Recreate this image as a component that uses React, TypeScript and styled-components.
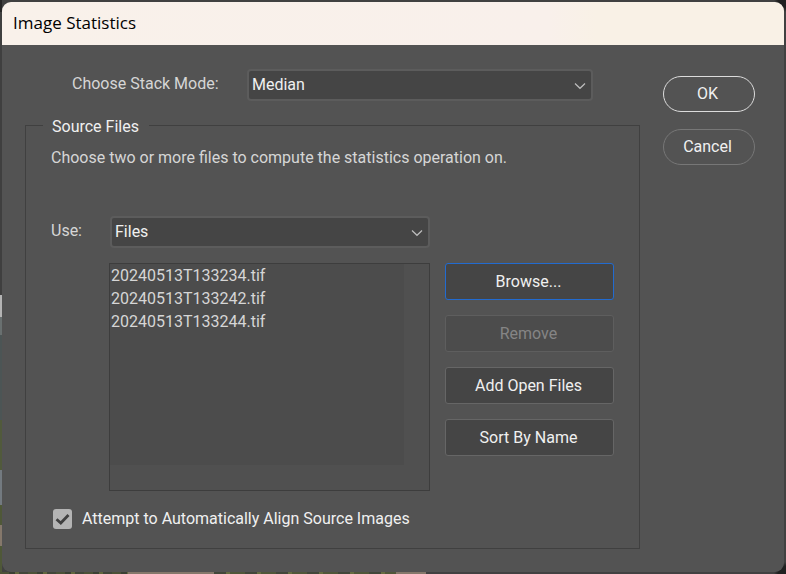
import React, { useId, useState } from 'react';
import styled, { createGlobalStyle } from 'styled-components';

const uiFont = 'Roboto, "Noto Sans", sans-serif';
const titleFont = '"Open Sans", "Noto Sans", sans-serif';

const GlobalStyle = createGlobalStyle`
  * {
    box-sizing: border-box;
  }
  body {
    margin: 0;
    min-height: 100vh;
    font: 16px/22px ${uiFont};
    color: #d6d6d6;
    background:
      repeating-linear-gradient(90deg, #4c5238 0 9px, #3b4134 9px 15px, #61673f 15px 19px, #42473a 19px 28px)
        left bottom / 128px 2px no-repeat,
      linear-gradient(#85786b, #85786b) 128px 100% / 86px 2px no-repeat,
      repeating-linear-gradient(90deg, #42473a 0 12px, #666c42 12px 16px, #50573a 16px 31px)
        214px 100% / 182px 2px no-repeat,
      linear-gradient(#85786b, #85786b) 396px 100% / 30px 2px no-repeat,
      linear-gradient(
          #262626 0 12px,
          #3f3f3f 12px 295px,
          #b4b4b4 295px 317px,
          #697070 317px 335px,
          #4c5555 335px 420px,
          #515a3c 420px 470px,
          #737a80 470px 505px,
          #4f5838 505px 525px,
          #85786b 525px 546px,
          #4f5838 546px
        )
        left top / 2px 100% no-repeat,
      radial-gradient(circle at 100% 0, #202020 8px, transparent 12px),
      radial-gradient(circle at 100% 100%, #202020 8px, transparent 12px),
      #414141;
  }
`;

const Dialog = styled.main`
  display: flex;
  flex-direction: column;
  min-height: calc(100vh - 4px);
  margin: 2px;
  overflow: hidden;
  border-radius: 9px;
  background: #535353;
`;

const Page = styled.div`
  display: flow-root;
`;

const TitleBar = styled.header`
  height: 43px;
  padding: 0 11px;
  background: linear-gradient(90deg, #f9f1ea, #f9f0eb 70%, #f9f1e6 76%);
`;

const Title = styled.h1`
  margin: 0;
  font: 17px/42px ${titleFont};
  color: #000;
`;

const Body = styled.form`
  display: grid;
  grid-template-columns: 1fr 92px;
  column-gap: 23px;
  padding: 24px 29px 23px 23px;
`;

const Settings = styled.div`
  display: flex;
  flex-direction: column;
  gap: 12px;
`;

const ModeRow = styled.div`
  display: grid;
  grid-template-columns: 175px 1fr;
  align-items: center;
  padding: 0 47px;
`;

const Label = styled.label`
  align-self: center;
  padding-bottom: 2px;
`;

const SelectBox = styled.div`
  display: grid;
  align-items: center;
  justify-items: end;

  & > * {
    grid-area: 1 / 1;
  }
`;

const Select = styled.select`
  width: 100%;
  height: 32px;
  padding: 0 28px 0 3px;
  appearance: none;
  border: 2px solid #5c5c5c;
  border-radius: 4px;
  outline: none;
  background: #454545;
  color: #f0f0f0;
  font: inherit;
`;

const Chevron = styled.svg`
  z-index: 1;
  width: 12px;
  height: 8px;
  margin: 2px 7px 0 0;
  pointer-events: none;
  fill: none;
  stroke: #bdbdbd;
`;

const Group = styled.fieldset`
  min-width: 0;
  margin: 0;
  padding: 9px 25px 18px;
  border: 1px solid #404040;
`;

const Legend = styled.legend`
  margin-left: -8px;
  padding: 3px 10px 0 9px;
  color: #f0f0f0;
`;

const Hint = styled.p`
  margin: 0 0 47px;
`;

const FileGrid = styled.div`
  display: grid;
  grid-template-columns: 58px 1fr 169px;
  gap: 15px 0;
`;

const Actions = styled.div`
  display: flex;
  flex-direction: column;
  gap: 15px;
`;

const UseSelect = styled.div`
  padding: 0 15px 0 1px;
`;

const ListBox = styled.div`
  grid-column: 2;
  display: grid;
  grid-template: 1fr 25px / 1fr 25px;
  height: 228px;
  margin-right: 15px;
  border: 1px solid #3d3d3d;
  background: #505050;
`;

const FileList = styled.select`
  height: 100%;
  padding: 2px 0 0;
  overflow: hidden;
  border: 0;
  border-radius: 0;
  outline: none;
  background: #4c4c4c;
  color: #d6d6d6;
  font: inherit;
`;

const FileOption = styled.option`
  height: 23px;
  padding: 0 1px;
  line-height: 23px;
`;

const ActionButton = styled.button<{ $primary?: boolean }>`
  height: 37px;
  padding: 0 2px 0 0;
  border: 1px solid ${(p) => (p.$primary ? '#226bd0' : '#666')};
  border-radius: 3px;
  background: #454545;
  color: #f0f0f0;
  font: inherit;

  &:disabled {
    border-color: #5e5e5e;
    background: #4c4c4c;
    color: #858585;
  }
`;

const CheckLabel = styled.label`
  display: flex;
  align-items: center;
  gap: 10px;
  margin: 17px 0 0 2px;
  color: #f0f0f0;
`;

const CheckMark = styled.span`
  display: grid;
  width: 19px;
  height: 20px;

  & > * {
    grid-area: 1 / 1;
    width: 100%;
    height: 100%;
  }
`;

const Checkbox = styled.input`
  margin: 0;
  appearance: none;
  border-radius: 3px;
  background: #b4b4b4;
`;

const Tick = styled.svg`
  z-index: 1;
  pointer-events: none;
  fill: none;
  stroke: #404040;
`;

const DialogButtons = styled.div`
  display: flex;
  flex-direction: column;
  gap: 17px;
  padding-top: 7px;
`;

const PillButton = styled.button<{ $default?: boolean }>`
  height: 36px;
  padding: 0 3px 0 0;
  border: 1px solid ${(p) => (p.$default ? '#dcdcdc' : '#777')};
  border-radius: 18px;
  background: transparent;
  color: #f0f0f0;
  font: inherit;
`;

function DropDown({ id, options }: { id: string; options: string[] }) {
  return (
    <SelectBox>
      <Select id={id}>
        {options.map((option) => (
          <option key={option}>{option}</option>
        ))}
      </Select>
      <Chevron viewBox="0 0 12 8" aria-hidden="true">
        <path d="M1 1.5 6 6.3 11 1.5" strokeWidth="1.2" />
      </Chevron>
    </SelectBox>
  );
}

const files = ['20240513T133234.tif', '20240513T133242.tif', '20240513T133244.tif'];

export default function App() {
  const id = useId();
  const [align, setAlign] = useState(true);

  return (
    <Page>
      <GlobalStyle />
      <Dialog>
        <TitleBar>
          <Title>Image Statistics</Title>
        </TitleBar>
        <Body onSubmit={(event) => event.preventDefault()}>
          <Settings>
            <ModeRow>
              <Label htmlFor={`${id}-mode`}>Choose Stack Mode:</Label>
              <DropDown id={`${id}-mode`} options={['Median']} />
            </ModeRow>
            <Group>
              <Legend>Source Files</Legend>
              <Hint>Choose two or more files to compute the statistics operation on.</Hint>
              <FileGrid>
                <Label htmlFor={`${id}-use`}>Use:</Label>
                <UseSelect>
                  <DropDown id={`${id}-use`} options={['Files']} />
                </UseSelect>
                <span />
                <ListBox>
                  <FileList multiple aria-label="Source files">
                    {files.map((file) => (
                      <FileOption key={file}>{file}</FileOption>
                    ))}
                  </FileList>
                </ListBox>
                <Actions>
                  <ActionButton type="button" $primary>
                    Browse...
                  </ActionButton>
                  <ActionButton type="button" disabled>
                    Remove
                  </ActionButton>
                  <ActionButton type="button">Add Open Files</ActionButton>
                  <ActionButton type="button">Sort By Name</ActionButton>
                </Actions>
              </FileGrid>
              <CheckLabel>
                <CheckMark>
                  <Checkbox type="checkbox" checked={align} onChange={(event) => setAlign(event.target.checked)} />
                  {align && (
                    <Tick viewBox="0 0 19 20" aria-hidden="true">
                      <path d="M3.5 10.2 7.8 14 15.5 6" strokeWidth="2.8" />
                    </Tick>
                  )}
                </CheckMark>
                Attempt to Automatically Align Source Images
              </CheckLabel>
            </Group>
          </Settings>
          <DialogButtons>
            <PillButton type="submit" $default>
              OK
            </PillButton>
            <PillButton type="button">Cancel</PillButton>
          </DialogButtons>
        </Body>
      </Dialog>
    </Page>
  );
}
